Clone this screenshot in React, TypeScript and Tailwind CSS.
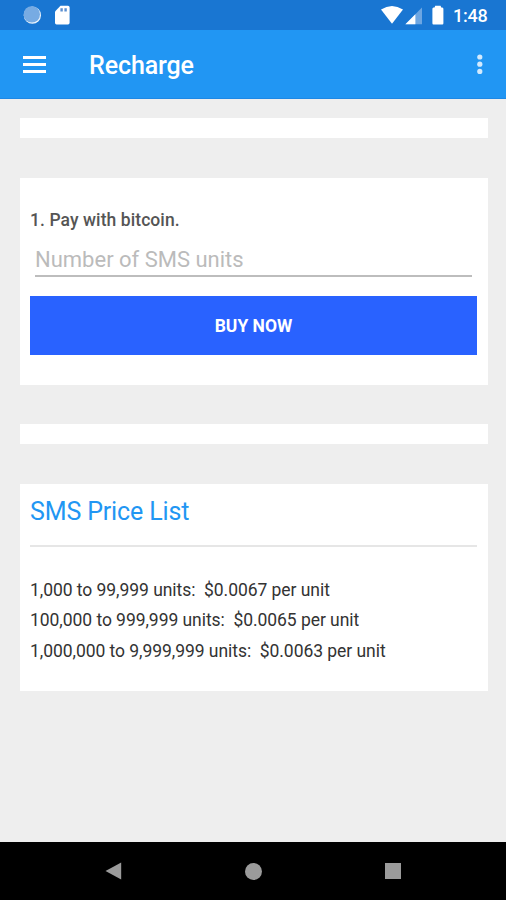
const prices = [
  { id: 1, range: "1,000 to 99,999 units:", price: "$0.0067 per unit" },
  { id: 2, range: "100,000 to 999,999 units:", price: "$0.0065 per unit" },
  { id: 3, range: "1,000,000 to 9,999,999 units:", price: "$0.0063 per unit" },
];

function StatusBar() {
  return (
    <div className="flex h-[30px] items-center bg-[#1976d2] pl-[23px] pr-[18px] text-white">
      <svg width="19" height="20" viewBox="0 0 19 20">
        <circle cx="9.4" cy="10.2" r="8.6" fill="#e9f2fb" />
        <circle cx="8.8" cy="9.4" r="8.2" fill="#77abe3" />
      </svg>
      <svg className="ml-[13px]" width="15" height="20" viewBox="0 0 15 20">
        <path d="M5.5 0.8H13Q14.6 0.8 14.6 2.4V17.8Q14.6 19.4 13 19.4H1.6Q0 19.4 0 17.8V6.4Z" fill="#fff" />
        <path d="M5.4 3.2h2.4v3.2H5.4zM9.4 3.2h2.4v3.2H9.4z" fill="#5b8fd0" />
      </svg>
      <svg className="ml-auto" width="22" height="20" viewBox="0 0 22 20">
        <path d="M0 4.6Q11-2.6 22 4.6L11 18.8Z" fill="#fff" />
      </svg>
      <svg className="ml-[2px]" width="18" height="20" viewBox="0 0 18 20">
        <path d="M17 2.4V19.2H0.4Z" fill="#6da6e2" />
        <path d="M10.4 9.2V19.2H0.4Z" fill="#fff" />
      </svg>
      <svg className="ml-[9px]" width="12" height="20" viewBox="0 0 12 20">
        <path d="M3.2 0.8h5.4l0.6 1.6H10.2Q11.4 2.6 11.4 3.8V18.2Q11.4 19.4 10.4 19.4H1.4Q0.4 19.4 0.4 18.2V3.8Q0.4 2.6 1.6 2.4H2.6Z" fill="#fff" />
      </svg>
      <span className="ml-[9px] mt-[2px] w-[35px] whitespace-nowrap text-[18px] font-medium leading-[20px] tracking-[-0.2px]">1:48</span>
    </div>
  );
}

function AppBar() {
  return (
    <header className="flex h-[69px] items-center border-b border-[#1e88e5] bg-[#2196f3] pl-[23px] pr-[22px] text-white">
      <div className="flex w-[23px] flex-col gap-1">
        <span className="h-[3px] bg-white" />
        <span className="h-[3px] bg-white" />
        <span className="h-[3px] bg-white" />
      </div>
      <h1 className="ml-[43px] mt-[3px] text-[25px] font-medium leading-8 tracking-[-0.1px]">Recharge</h1>
      <svg className="ml-auto" width="8" height="22" viewBox="0 0 8 22" fill="#d3eafd">
        <circle cx="3.8" cy="4" r="2.6" />
        <circle cx="3.8" cy="11.2" r="2.6" />
        <circle cx="3.8" cy="18.4" r="2.6" />
      </svg>
    </header>
  );
}

function NavBar() {
  return (
    <nav className="flex h-[58px] items-center justify-between bg-black px-[105px]">
      <svg width="17" height="18" viewBox="0 0 17 18">
        <path d="M16.2 0.5V17.5L0.5 9Z" fill="#9b9b9b" />
      </svg>
      <span className="h-[17px] w-[17px] rounded-full bg-[#9b9b9b]" />
      <span className="h-4 w-4 bg-[#9b9b9b]" />
    </nav>
  );
}

export default function App() {
  return (
    <div className="flex h-[900px] w-[506px] flex-col overflow-hidden bg-[#eeeeee] font-['Roboto',sans-serif]">
      <StatusBar />
      <AppBar />

      <main className="flex flex-1 flex-col pl-5 pr-[18.5px] pt-[19px]">
        <div className="h-5 bg-white" />

        <section className="mt-10 h-[206.5px] bg-white px-[10px] pt-[31px]">
          <p className="text-[17.5px] font-medium leading-[22px] tracking-[0.08px] text-[#555555]">1. Pay with bitcoin.</p>
          <input
            type="text"
            placeholder="Number of SMS units"
            className="ml-[5px] mt-[10px] block h-[36px] w-[437px] border-b-2 border-[#bdbdbd] pt-[2px] text-[22px] text-[#555555] outline-none placeholder:text-[#bbbbbb]"
          />
          <button className="mt-[19px] block h-[59px] w-[447px] bg-[#2962ff] pt-[2px] text-[17.5px] font-bold text-white">
            BUY NOW
          </button>
        </section>

        <div className="mt-[39.5px] h-5 bg-white" />

        <section className="mt-[39.5px] h-[207.5px] bg-white px-[10px] pt-[13px]">
          <h2 className="text-[25px] leading-[30px] tracking-[-0.14px] text-[#2196f3]">SMS Price List</h2>
          <hr className="mt-[18.5px] w-[447px] border-t-2 border-[#e6e6e6]" />
          <ul className="mt-7 text-[17.5px] leading-[30.3px] tracking-[-0.05px] text-[#333333]">
            {prices.map((p) => (
              <li key={p.id} className="whitespace-pre">
                {p.range}  {p.price}
              </li>
            ))}
          </ul>
        </section>
      </main>

      <NavBar />
    </div>
  );
}
